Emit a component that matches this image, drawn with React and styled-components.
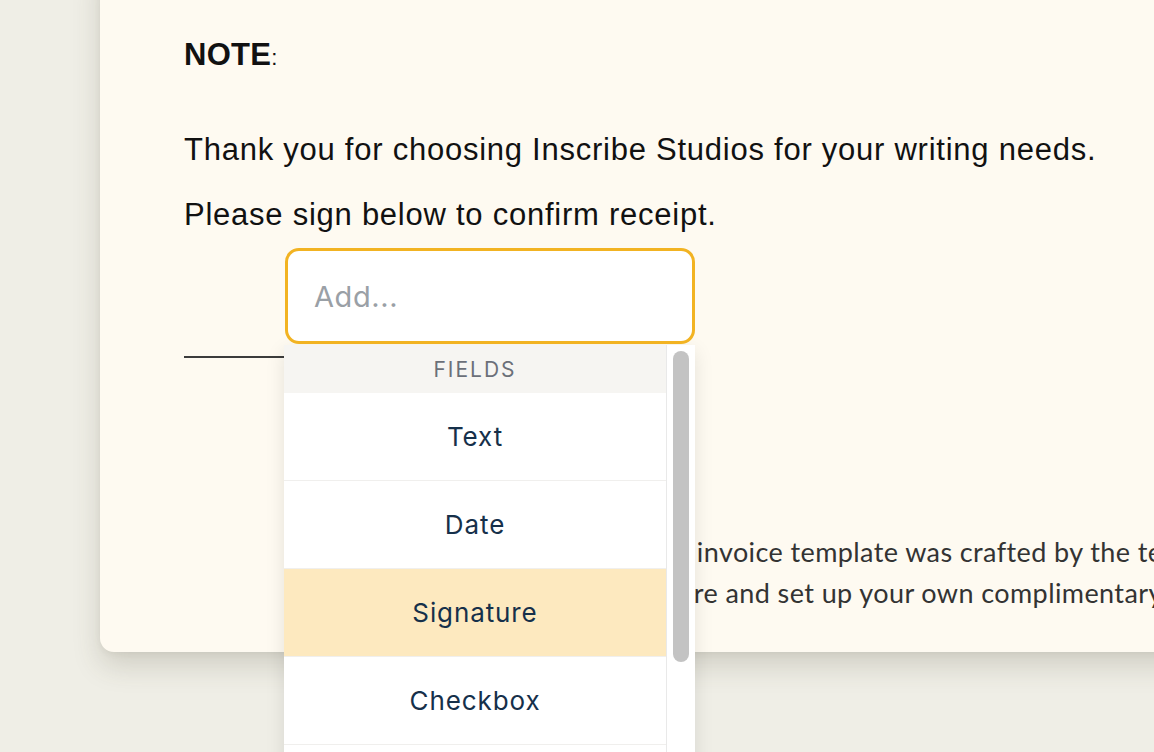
import React from "react";
import styled, { createGlobalStyle } from "styled-components";

const GlobalStyle = createGlobalStyle`
  html, body {
    margin: 0;
    padding: 0;
    background: #efeee6;
    overflow: hidden;
  }
`;

const Page = styled.div`
  position: relative;
  width: 1154px;
  height: 752px;
  overflow: hidden;
  padding-left: 100px;
  box-sizing: border-box;
`;

const Card = styled.div`
  margin-top: -40px;
  width: 1120px;
  height: 692px;
  box-sizing: border-box;
  padding: 75px 0 0 84px;
  overflow: hidden;
  background: #fefaf1;
  border-radius: 14px;
  box-shadow: 0 14px 28px rgba(70, 64, 45, 0.18), 0 2px 6px rgba(70, 64, 45, 0.06);
  font-family: "Liberation Sans", Arial, sans-serif;
  color: #111;
`;

const Heading = styled.div`
  font-size: 31px;
  line-height: 40px;
  font-weight: 700;
  letter-spacing: 0.3px;
  span {
    font-weight: 400;
    font-size: 22px;
  }
`;

const Line = styled.p`
  margin: ${(p) => p.$gap}px 0 0;
  font-size: 31px;
  line-height: 40px;
  letter-spacing: 0.75px;
  white-space: nowrap;
`;

const SignLine = styled.div`
  margin-top: 121px;
  width: 300px;
  height: 2px;
  background: #3c3c3c;
`;

const Footer = styled.div`
  margin-top: 173px;
  font-family: Lato, "Open Sans", sans-serif;
  font-size: 27px;
  line-height: 41px;
  letter-spacing: 0.4px;
  color: #333;
  white-space: nowrap;
`;

const FooterLine = styled.div`
  padding-left: ${(p) => p.$indent}px;
`;

const Dropdown = styled.div`
  position: absolute;
  left: 284px;
  top: 248px;
  width: 411px;
  font-family: Inter, "Noto Sans", sans-serif;
`;

const Input = styled.div`
  margin-left: 1px;
  height: 96px;
  box-sizing: border-box;
  border: 3px solid #f2b322;
  border-radius: 14px;
  background: #fff;
  display: flex;
  align-items: center;
  padding-left: 26px;
  font-size: 29px;
  letter-spacing: 0.6px;
  color: #9aa0a6;
  position: relative;
  z-index: 2;
`;

const Menu = styled.div`
  display: flex;
  margin-top: 1px;
  background: #fff;
  box-shadow: 0 6px 18px rgba(0, 0, 0, 0.1);
`;

const Items = styled.div`
  flex: 1;
  display: flex;
  flex-direction: column;
`;

const GroupLabel = styled.div`
  height: 48px;
  display: flex;
  align-items: center;
  justify-content: center;
  background: #f6f5f2;
  color: #6b7079;
  font-size: 21px;
  letter-spacing: 2px;
  text-transform: uppercase;
`;

const Item = styled.div`
  height: 87px;
  display: flex;
  align-items: center;
  justify-content: center;
  border-bottom: 1px solid #f0efed;
  background: ${(p) => (p.$active ? "#fde9bf" : "#fff")};
  color: #16304a;
  font-size: 26px;
  letter-spacing: 0.9px;
`;

const Track = styled.div`
  width: 29px;
  border-left: 1px solid #e9e9e9;
  box-sizing: border-box;
  padding: 6px 0 0 6px;
  background: #fff;
`;

const Thumb = styled.div`
  width: 16px;
  height: 311px;
  border-radius: 8px;
  background: #c3c3c3;
`;

const fields = ["Text", "Date", "Signature", "Checkbox", "Initials"];

export default function App() {
  return (
    <Page>
      <GlobalStyle />
      <Card>
        <Heading>
          NOTE<span>:</span>
        </Heading>
        <Line $gap={52}>
          Thank you for choosing Inscribe Studios for your writing needs.
        </Line>
        <Line $gap={25}>Please sign below to confirm receipt.</Line>
        <SignLine />
        <Footer>
          <FooterLine $indent={455}>
            This invoice template was crafted by the team at Inscribe Studios.
          </FooterLine>
          <FooterLine $indent={442}>
            Explore and set up your own complimentary account today.
          </FooterLine>
        </Footer>
      </Card>

      <Dropdown>
        <Input>Add...</Input>
        <Menu>
          <Items>
            <GroupLabel>Fields</GroupLabel>
            {fields.map((f) => (
              <Item key={f} $active={f === "Signature"}>
                {f}
              </Item>
            ))}
          </Items>
          <Track>
            <Thumb />
          </Track>
        </Menu>
      </Dropdown>
    </Page>
  );
}
